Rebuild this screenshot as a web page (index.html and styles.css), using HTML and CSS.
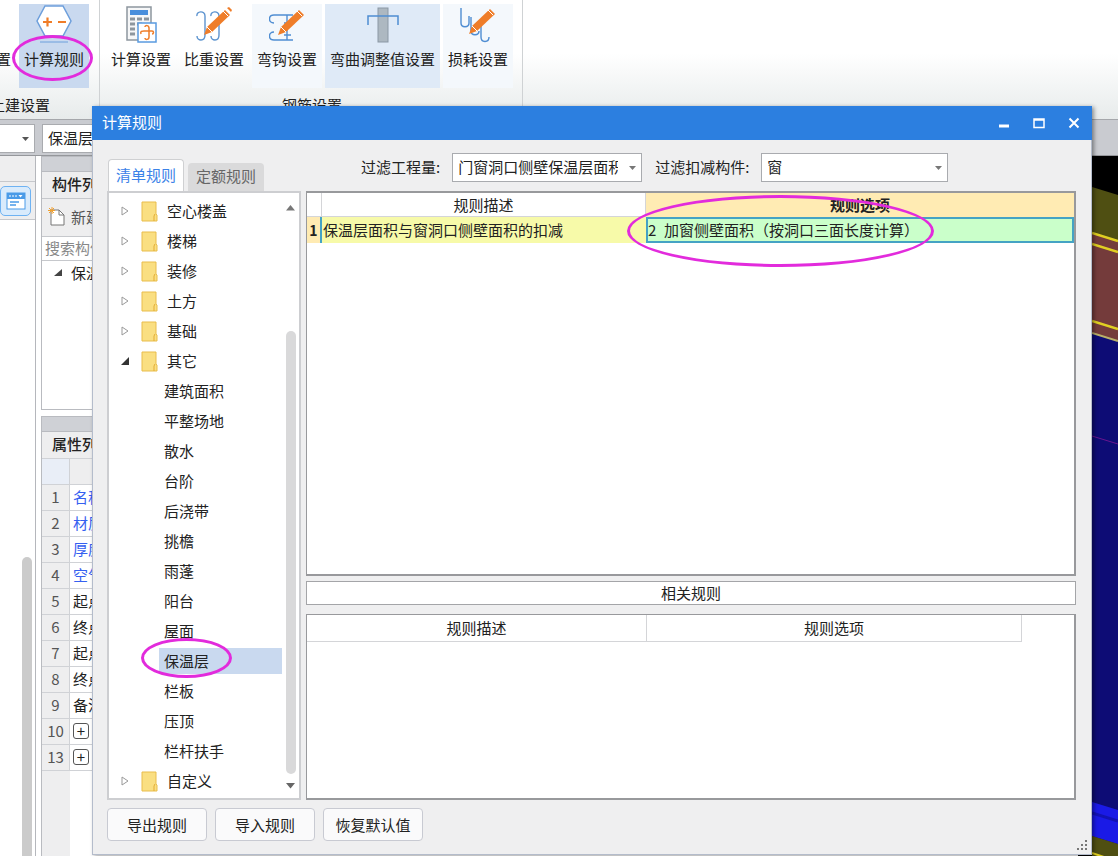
FILE: index.html
```html
<!DOCTYPE html>
<html lang="zh-CN">
<head>
<meta charset="utf-8">
<title>计算规则</title>
<link rel="stylesheet" href="styles.css">
</head>
<body>
<div class="app">
  <header class="ribbon">
    <section class="ribbon-group ribbon-group-civil">
      <div class="ribbon-items">
        <button class="ribbon-btn">
          <svg width="36" height="38" viewBox="0 0 36 38"></svg>
          <span>计算设置</span>
        </button>
        <button class="ribbon-btn is-active">
          <svg width="36" height="38" viewBox="0 0 36 38" fill="none">
            <path d="M9 1h18l8 15-8 15H9L1 16z" fill="#fff" stroke="#6d9fdc" stroke-width="1.5"/>
            <path d="M7 17h9M11.500 12.500v9M22 17h8" stroke="#ef7d29" stroke-width="2.200"/>
            <path d="M4 37h28" stroke="#6d9fdc"/>
          </svg>
          <span>计算规则</span>
        </button>
      </div>
      <div class="ribbon-label">土建设置</div>
    </section>
    <section class="ribbon-group ribbon-group-rebar">
      <div class="ribbon-items">
        <button class="ribbon-btn">
          <svg width="36" height="38" viewBox="0 0 36 38" fill="none">
            <rect x="4" y="2" width="24" height="33" fill="#f6f7f8" stroke="#8d969e" stroke-width="1.5"/>
            <rect x="7" y="5" width="18" height="5" fill="#4a8fdc"/>
            <path d="M7 14h5M14 14h5M21 14h5M7 19h5M14 19h5M7 24h5M7 29h5" stroke="#8d969e" stroke-width="3"/>
            <rect x="15" y="18" width="18" height="19" fill="#fff" stroke="#5a9be0" stroke-width="1.5"/>
            <path d="M22 22c0-2 4-2 4 1v9c0 3-4 3-4 1M18 29c-1-3 1-3 3-3h8c2 0 2 3 0 3" stroke="#ef7d29" stroke-width="1.5"/>
          </svg>
          <span>计算设置</span>
        </button>
        <button class="ribbon-btn">
          <svg width="36" height="38" viewBox="0 0 36 38" fill="none">
            <path d="M1 11c-1-5 8-6 8 0v19c0 7-8 6-8 1M15 11c-1-5 8-6 8 0v19c0 7-8 6-8 1" stroke="#5c93cf" stroke-width="1.400"/>
            <path d="M8 30l3-8L29 5l5 5-18 17z" fill="#ef7d29"/><path d="M31 3l2-1 3 3-1 2z" fill="#ef7d29"/><path d="M27 6l5 5M11 22l5 5" stroke="#fff"/>
          </svg>
          <span>比重设置</span>
        </button>
        <button class="ribbon-btn is-soft">
          <svg width="36" height="38" viewBox="0 0 36 38" fill="none">
            <path d="M5 18c-6 0-6-8 0-8h19M5 27c-6 0-6 8 0 8h19M18 10v25M15 18h7M15 30h7" stroke="#4f8dd2" stroke-width="1.400"/>
            <path d="M9 30l3-8L30 5l5 5-18 17z" fill="#ef7d29"/><path d="M28 6l5 5M12 22l5 5" stroke="#fff"/>
          </svg>
          <span>弯钩设置</span>
        </button>
        <button class="ribbon-btn is-hover">
          <svg width="36" height="38" viewBox="0 0 36 38" fill="none">
            <rect x="13" y="3" width="10" height="34" fill="#adb8c1" stroke="#8b98a5"/>
            <path d="M3 20v-9h30v9" stroke="#4f8dd2" stroke-width="1.500"/>
          </svg>
          <span>弯曲调整值设置</span>
        </button>
        <button class="ribbon-btn is-soft">
          <svg width="36" height="38" viewBox="0 0 36 38" fill="none">
            <path d="M1 3v15c0 5 8 5 8 0v-7M11 12v14c0 5 8 5 8 0M21 20v12c0 6 8 6 8 0" stroke="#4f8dd2" stroke-width="1.400"/>
            <path d="M9 29l3-8L30 4l5 5-18 17z" fill="#ef7d29"/><path d="M28 5l5 5M12 21l5 5" stroke="#fff"/>
          </svg>
          <span>损耗设置</span>
        </button>
      </div>
      <div class="ribbon-label">钢筋设置</div>
    </section>
  </header>

  <div class="selector-bar">
    <span class="combo combo-floor">
      <select aria-label="楼层"><option></option></select>
      <svg class="combo-arrow" width="8" height="5" viewBox="0 0 8 5"><path d="M0 0h7L3.500 4z" fill="#555"/></svg>
    </span>
    <span class="combo combo-type">
      <select aria-label="构件类型"><option>保温层</option></select>
    </span>
  </div>

  <main class="workspace">
    <aside class="nav">
      <div class="nav-head"></div>
      <div class="nav-tools">
        <button class="nav-btn" aria-label="视图">
          <svg width="20" height="18" viewBox="0 0 20 18"><rect x="1" y="1" width="18" height="16" fill="#fff" stroke="#4a9be8"/><path d="M1 1h18v6H1z" fill="#4a9be8"/><path d="M3 4h2M6 4h2M9 4h2" stroke="#fff"/><path d="M12.500 3h4l-2 2.500z" fill="#fff"/><path d="M4 10h9M4 13h6" stroke="#4a9be8" stroke-width="1.500"/></svg>
        </button>
      </div>
      <div class="nav-body"><div class="nav-thumb"></div></div>
    </aside>

    <div class="panels">
      <section class="panel">
        <div class="panel-grip"></div>
        <h2 class="panel-title">构件列表</h2>
        <div class="panel-tools">
          <button class="new-btn">
            <svg width="18" height="20" viewBox="0 0 18 20" fill="none"><path d="M3 3h8l5 5v10H3z" fill="#fff" stroke="#777"/><path d="M11 3v5h5" stroke="#777"/><path d="M4 0v7M0 3.500h7M1 1l5 5M6 1L1 6" stroke="#f0a030"/></svg>
            <span>新建</span>
          </button>
        </div>
        <input class="search" type="text" placeholder="搜索构件" aria-label="搜索构件">
        <div class="component-list">
          <div class="component-root">
            <svg width="9" height="8" viewBox="0 0 9 8"><path d="M8 0v7H0z" fill="#444"/></svg>
            <span>保温层</span>
          </div>
        </div>
      </section>
      <section class="panel panel-props">
        <div class="panel-grip"></div>
        <h2 class="panel-title">属性列表</h2>
        <table class="props">
          <thead><tr><th class="corner"></th><th></th></tr></thead>
          <tbody>
            <tr><th>1</th><td class="is-key">名称</td></tr>
            <tr><th>2</th><td class="is-key">材质</td></tr>
            <tr><th>3</th><td class="is-key">厚度</td></tr>
            <tr><th>4</th><td class="is-key">空气</td></tr>
            <tr><th>5</th><td>起点</td></tr>
            <tr><th>6</th><td>终点</td></tr>
            <tr><th>7</th><td>起点</td></tr>
            <tr><th>8</th><td>终点</td></tr>
            <tr><th>9</th><td>备注</td></tr>
            <tr><th>10</th><td><button class="expander" aria-label="展开">+</button></td></tr>
            <tr><th>13</th><td><button class="expander" aria-label="展开">+</button></td></tr>
          </tbody>
        </table>
        <div class="props-rest"></div>
      </section>
    </div>

    <div class="viewport">
      <svg width="26" height="701" viewBox="0 0 26 701" fill="none">
        <path d="M0 31l26 8v50L0 80z" fill="#4f4f12"/>
        <path d="M0 77l26 8v100L0 177z" fill="#743b3b"/>
        <path d="M0 177l26 8v516H0z" fill="#0d0c75"/>
        <path d="M0 77l26 8M0 88l26 8M0 165l26 8" stroke="#e0cf22" stroke-width="2.500"/>
        <path d="M0 177l26 8" stroke="#b9b06a" stroke-width="2"/>
        <path d="M0 280l26 8" stroke="#6a1590"/>
        <path d="M0 646l26 8v34L0 680z" fill="#1a1ae6"/>
        <path d="M0 657l26 8" stroke="#1212b4" stroke-width="3"/>
        <path d="M0 680l26 8v13H0z" fill="#4f4f12"/>
        <path d="M0 697l12 4" stroke="#e0cf22" stroke-width="2"/>
      </svg>
    </div>
  </main>
</div>

<div class="dialog" role="dialog" aria-labelledby="dialog-title">
  <div class="titlebar">
    <h1 id="dialog-title">计算规则</h1>
    <button aria-label="最小化"><svg width="12" height="12" viewBox="0 0 12 12"><path d="M1 9h10" stroke="#fff" stroke-width="3"/></svg></button>
    <button aria-label="最大化"><svg width="12" height="12" viewBox="0 0 12 12" fill="none"><path d="M1 10.500V2h10v8.500zM1 3h10" stroke="#fff" stroke-width="1.500"/></svg></button>
    <button aria-label="关闭"><svg width="12" height="12" viewBox="0 0 12 12"><path d="M1.500 1.500l9 9M10.500 1.500l-9 9" stroke="#fff" stroke-width="2"/></svg></button>
  </div>

  <div class="dialog-body">
    <div class="tabs" role="tablist">
      <button class="tab is-selected" role="tab" aria-selected="true">清单规则</button>
      <button class="tab" role="tab" aria-selected="false">定额规则</button>
    </div>
    <div class="filters">
      <label for="filter-qty">过滤工程量:</label>
      <span class="combo combo-qty">
        <select id="filter-qty"><option>门窗洞口侧壁保温层面积</option></select>
        <svg class="combo-arrow" width="8" height="5" viewBox="0 0 8 5"><path d="M0 0h7L3.500 4z" fill="#777"/></svg>
      </span>
      <label for="filter-part">过滤扣减构件:</label>
      <span class="combo combo-part">
        <select id="filter-part"><option>窗</option></select>
        <svg class="combo-arrow" width="8" height="5" viewBox="0 0 8 5"><path d="M0 0h7L3.500 4z" fill="#777"/></svg>
      </span>
    </div>

    <div class="tree-panel">
      <svg class="defs" width="0" height="0">
        <symbol id="closed" viewBox="0 0 8 10"><path d="M1 1l6 4-6 4z" fill="#fff" stroke="#999"/></symbol>
        <symbol id="open" viewBox="0 0 8 10"><path d="M8 1v8H0z" fill="#333"/></symbol>
        <symbol id="folder" viewBox="0 0 17 21"><path d="M1 1h14v12l1 1v6H1z" fill="#fadf82" stroke="#e9bd4c"/><path d="M13 20v-5l1-2" fill="none" stroke="#e3ac35"/></symbol>
      </svg>
      <ul class="tree">
        <li class="branch"><svg width="8" height="10"><use href="#closed"/></svg><svg width="17" height="21"><use href="#folder"/></svg><span>空心楼盖</span></li>
        <li class="branch"><svg width="8" height="10"><use href="#closed"/></svg><svg width="17" height="21"><use href="#folder"/></svg><span>楼梯</span></li>
        <li class="branch"><svg width="8" height="10"><use href="#closed"/></svg><svg width="17" height="21"><use href="#folder"/></svg><span>装修</span></li>
        <li class="branch"><svg width="8" height="10"><use href="#closed"/></svg><svg width="17" height="21"><use href="#folder"/></svg><span>土方</span></li>
        <li class="branch"><svg width="8" height="10"><use href="#closed"/></svg><svg width="17" height="21"><use href="#folder"/></svg><span>基础</span></li>
        <li class="branch"><svg width="8" height="10"><use href="#open"/></svg><svg width="17" height="21"><use href="#folder"/></svg><span>其它</span></li>
        <li class="leaf"><span>建筑面积</span></li>
        <li class="leaf"><span>平整场地</span></li>
        <li class="leaf"><span>散水</span></li>
        <li class="leaf"><span>台阶</span></li>
        <li class="leaf"><span>后浇带</span></li>
        <li class="leaf"><span>挑檐</span></li>
        <li class="leaf"><span>雨蓬</span></li>
        <li class="leaf"><span>阳台</span></li>
        <li class="leaf"><span>屋面</span></li>
        <li class="leaf is-selected"><span>保温层</span><i class="mark mark-tree"></i></li>
        <li class="leaf"><span>栏板</span></li>
        <li class="leaf"><span>压顶</span></li>
        <li class="leaf"><span>栏杆扶手</span></li>
        <li class="branch"><svg width="8" height="10"><use href="#closed"/></svg><svg width="17" height="21"><use href="#folder"/></svg><span>自定义</span></li>
      </ul>
      <div class="scrollbar">
        <svg width="10" height="6" viewBox="0 0 10 6"><path d="M0 5.500h9L4.500 0z" fill="#777"/></svg>
        <div class="scroll-track"><div class="scroll-thumb"></div></div>
        <svg width="10" height="6" viewBox="0 0 10 6"><path d="M0 0h9L4.500 5.500z" fill="#666"/></svg>
      </div>
    </div>

    <div class="rules">
      <div class="grid-frame grid-main">
        <table class="grid">
          <colgroup><col class="col-index"><col class="col-desc"><col></colgroup>
          <thead><tr><th></th><th>规则描述</th><th class="is-current">规则选项</th></tr></thead>
          <tbody><tr><th>1</th><td class="desc">保温层面积与窗洞口侧壁面积的扣减</td><td class="option"><span class="option-code">2</span>加窗侧壁面积（按洞口三面长度计算）<i class="mark mark-option"></i></td></tr></tbody>
        </table>
      </div>
      <h2 class="related-title">相关规则</h2>
      <div class="grid-frame grid-related">
        <table class="grid">
          <colgroup><col class="col-related"><col><col class="col-spare"></colgroup>
          <thead><tr><th>规则描述</th><th>规则选项</th><th></th></tr></thead>
        </table>
      </div>
    </div>

    <div class="actions">
      <button>导出规则</button>
      <button>导入规则</button>
      <button>恢复默认值</button>
    </div>
  </div>
  <svg class="size-grip" width="12" height="12" viewBox="0 0 12 12"><path d="M1 10h2M5 10h2M9 10h2M5 6h2M9 6h2M9 2h2" stroke="#777" stroke-width="2"/></svg>
</div>
<i class="mark mark-ribbon"></i>
</body>
</html>
```

FILE: styles.css
```css
* { box-sizing: border-box; }

body, button, input, select, h1, h2 {
  margin: 0;
  font: 15px/20px "Noto Sans CJK SC", sans-serif;
  color: #222;
}

body { overflow: hidden; }
button { padding: 0; border: 0; background: none; }
svg { display: block; flex: none; }
ul { list-style: none; margin: 0; padding: 0; }
table { border-collapse: separate; border-spacing: 0; }

/* Main window */
.app { display: flex; flex-direction: column; height: 100vh; background: #fff; }

.ribbon {
  display: flex;
  height: 120px;
  margin-left: -60px;
  background: linear-gradient(#fff 45%, #e7ebeb);
  border-bottom: 1px solid #a5a7ab;
}
.ribbon-group { padding-top: 4px; border-right: 1px solid #cfd2d4; }
.ribbon-group-civil { padding-left: 6px; padding-right: 10px; }
.ribbon-group-rebar { padding-left: 6px; padding-right: 9px; }
.ribbon-items { display: flex; gap: 3px; }
.ribbon-btn {
  display: flex;
  flex-direction: column;
  align-items: center;
  gap: 6px;
  height: 84px;
  padding: 1px 5px 0;
  white-space: nowrap;
}
.ribbon-btn.is-active { background: #c9d9ef; }
.ribbon-btn.is-hover { background: #dfeaf7; }
.ribbon-btn.is-soft { background: #f4f8fc; }
.ribbon-label { padding: 7px 0 0 5px; text-align: center; }

.combo { position: relative; display: inline-block; }
.combo select {
  display: block;
  width: 100%;
  height: 29px;
  padding: 0 23px 1px 5px;
  appearance: none;
  border: 1px solid #a9abaf;
  border-radius: 0;
  background: #fff;
}
.combo-arrow { position: absolute; right: 5px; top: 13px; }

.selector-bar {
  display: flex;
  gap: 7px;
  height: 36px;
  padding-top: 4px;
  background: #c9cbd0;
  border-bottom: 1px solid #95979b;
}
.combo-floor { width: 35px; }
.combo-floor select { border-left: 0; }
.combo-type { width: 180px; }

.workspace { display: flex; flex: 1; min-height: 0; }
.nav { display: flex; flex-direction: column; width: 36px; border-right: 1px solid #b5b7bc; }
.nav-head { height: 26px; background: #eeeeef; border-bottom: 1px solid #c6c8cc; }
.nav-tools { height: 38px; padding-top: 4px; background: #eeeeef; border-bottom: 1px solid #c6c8cc; }
.nav-btn {
  display: grid;
  place-items: center;
  width: 31px;
  height: 30px;
  border: 1px solid #6eb2f2;
  border-radius: 5px;
  background: #d9ebfc;
}
.nav-body { display: flex; flex: 1; justify-content: flex-end; align-items: flex-end; padding-right: 3px; }
.nav-thumb { width: 10px; height: 47%; border-radius: 5px 5px 0 0; background: #cbcbcb; }

.panels { display: flex; flex-direction: column; gap: 6px; flex: 1; padding-left: 5px; }
.panel { border: 1px solid #b9bbc0; border-right: 0; }
.panel-props { display: flex; flex: 1; flex-direction: column; border-bottom: 0; }
.panel-grip { height: 15px; background: #cfd1d6; border-bottom: 1px solid #b9bbc0; }
.panel-title { height: 26px; padding: 2px 0 0 10px; background: #eeeeef; font-weight: 500; }
.panel-tools { height: 38px; padding: 8px 0 0 6px; background: #eeeeef; border-top: 1px solid #c6c8cc; }
.new-btn { display: flex; gap: 5px; color: #555; }
.search { display: block; width: 100%; height: 25px; padding: 0 3px 2px; border: 1px solid #c6c8cc; border-width: 1px 0; border-radius: 0; }
.search::placeholder { color: #888; opacity: 1; }
.component-list { height: 148px; padding: 2px 0 0 12px; }
.component-root { display: flex; align-items: center; gap: 8px; }

.props { width: 100%; table-layout: fixed; }
.props th, .props td { height: 26px; padding: 0 0 2px; border: 1px solid #d0d2d6; border-width: 0 1px 1px 0; }
.props th { width: 28px; background: #eeeeef; font-weight: 400; color: #555; }
.props thead th { height: 27px; border-top-width: 1px; }
.props thead th:last-child { width: auto; }
.props .corner { background: #e9eef7; }
.props td { padding-left: 3px; color: #222; }
.props .is-key { color: #3560f0; }
.expander { display: block; width: 16px; height: 16px; border: 1px solid #555; border-radius: 3px; line-height: 12px; background: #fff; }
.props-rest { flex: 1; width: 28px; background: #eeeeef; }

.viewport { display: flex; width: 40px; justify-content: flex-end; background: #000; }

/* Dialog window */
.dialog {
  position: absolute;
  top: 106px;
  right: 26px;
  bottom: 1px;
  left: 92px;
  display: flex;
  flex-direction: column;
  border: 1px solid #b4bccb;
  border-top: 0;
  background: #efeff0;
  box-shadow: 2px 1px 4px rgba(0, 0, 0, .4);
}
.titlebar {
  display: flex;
  align-items: center;
  gap: 23px;
  height: 34px;
  margin: 0 -1px;
  padding: 0 12px 0 10px;
  background: #2c7fe0;
}
.titlebar h1 { flex: 1; padding-bottom: 2px; color: #fff; }

.dialog-body {
  display: grid;
  grid-template: 51px minmax(0, 1fr) 54px / 194px minmax(0, 1fr);
  column-gap: 5px;
  flex: 1;
  padding: 0 15px 0 14px;
}
.tabs { display: flex; align-items: flex-end; gap: 4px; padding-left: 1px; }
.tab { width: 76px; height: 28px; padding-bottom: 2px; border-radius: 4px 4px 0 0; background: #dadadb; color: #666; }
.tab.is-selected { height: 32px; border: 1px solid #cfd0d2; border-bottom: 0; background: #fff; color: #3b82e8; }
.filters { display: flex; align-items: flex-start; padding: 13px 0 0 55px; white-space: nowrap; }
.filters label { padding-top: 4px; }
.combo-qty { width: 190px; margin: 0 13px 0 12px; }
.combo-part { width: 187px; margin-left: 12px; }

.tree-panel { display: flex; border: 2px solid #cdced1; background: #fff; }
.defs { position: absolute; }
.tree { flex: 1; padding-top: 3px; }
.tree li { position: relative; display: flex; align-items: center; height: 30px; }
.branch { padding-left: 12px; }
.branch svg + svg { margin: 0 9px 0 12px; }
.leaf { padding-left: 50px; }
.leaf span { flex: 1; padding: 3px 0 3px 5px; }
.leaf.is-selected span { background: #c9d9ef; }
.scrollbar { display: flex; flex-direction: column; align-items: center; width: 17px; padding: 12px 0 9px; }
.scroll-track { display: flex; flex: 1; flex-direction: column; justify-content: flex-end; padding: 9px 0; }
.scroll-thumb { width: 10px; height: 80%; border-radius: 5px; background: #d9d9da; }

.rules { display: flex; flex-direction: column; }
.grid-frame { border: 2px solid #98999c; border-left-width: 1px; background: #fff; }
.grid-main { flex: 1; margin-bottom: 5px; }
.grid-related { height: 186px; border-top-width: 1px; }
.related-title { height: 24px; margin-bottom: 9px; padding-top: 1px; border: 1px solid #a4a5a8; background: #fff; text-align: center; }
.grid { width: 100%; table-layout: fixed; }
.grid th, .grid td { height: 25px; padding: 0; font-weight: 400; text-align: center; white-space: nowrap; }
.grid thead th { height: 24px; border-right: 1px solid #d4d5d8; border-bottom: 1px solid #d4d5d8; }
.grid thead th.is-current { border: 0; background: #ffebb3; font-weight: 700; }
.grid tbody th { background: #ffebb3; border-right: 2px solid #45a3c4; font-size: 14px; font-weight: 700; }
.grid .desc { padding-left: 1px; background: #f7faa9; text-align: left; }
.grid .option { position: relative; height: 26px; border: 2px solid #45a3c4; background: #caffca; text-align: left; }
.option-code { display: inline-block; width: 16px; }
.col-index { width: 15px; }
.col-desc { width: 324px; }
.col-related { width: 340px; }
.col-spare { width: 52px; }
.grid-related .grid thead th { height: 27px; }
.grid-related .grid thead th:last-child { border: 0; }

.actions { display: flex; gap: 8px; grid-column: 1 / -1; padding-top: 8px; }
.actions button { width: 100px; height: 33px; border: 1px solid #c8cad2; border-radius: 4px; background: #fafafb; }
.size-grip { position: absolute; right: 3px; bottom: 3px; }

/* Highlight rings */
.mark { position: absolute; border: 3px solid #e22bdc; border-radius: 50%; pointer-events: none; }
.mark-ribbon { left: 12px; top: 35px; width: 81px; height: 46px; }
.mark-option { left: -21px; top: -24px; width: 307px; height: 72px; }
.mark-tree { left: 32px; top: -8px; width: 91px; height: 40px; }
```
